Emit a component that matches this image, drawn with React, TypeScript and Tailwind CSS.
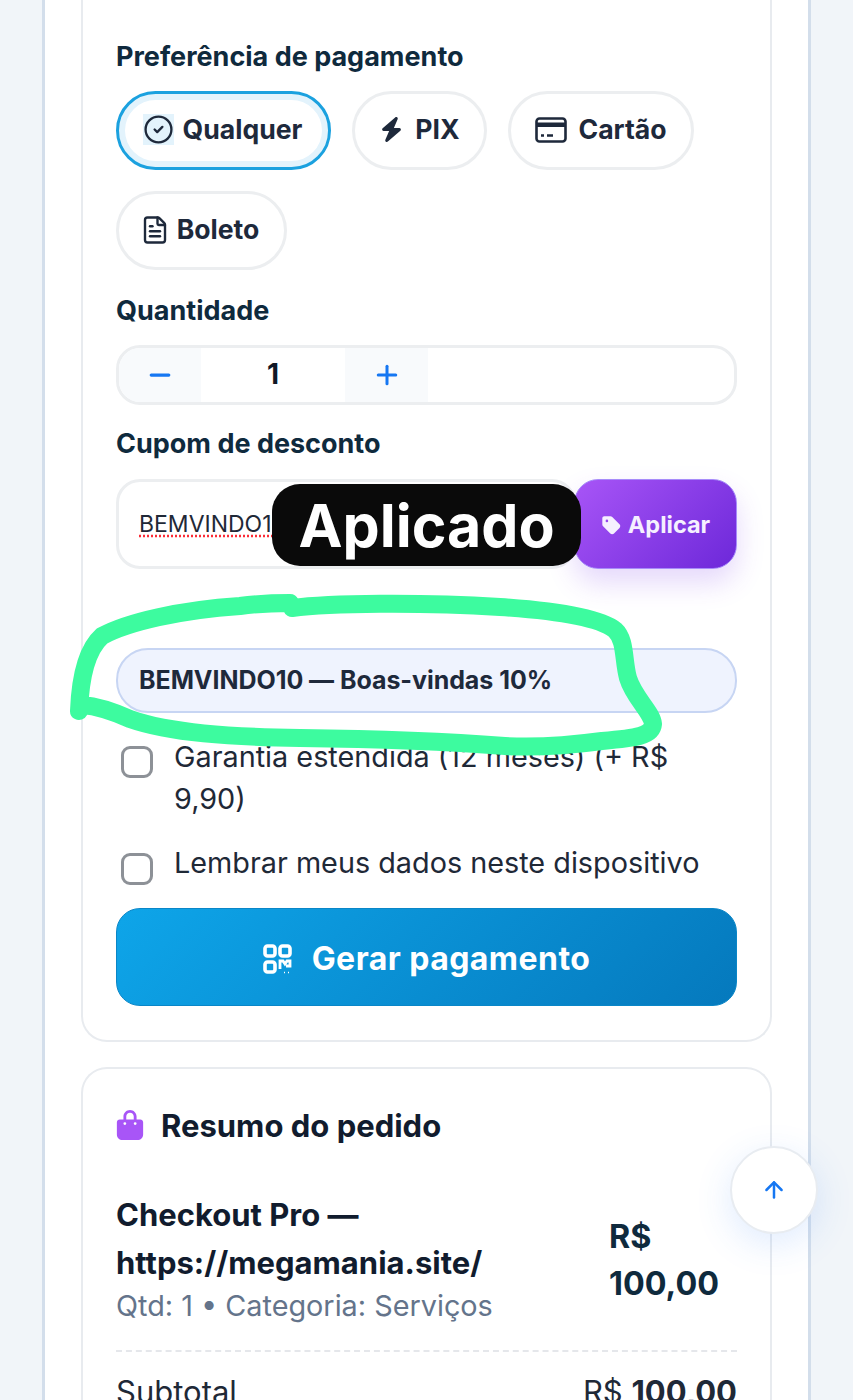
import React from 'react';
import { ArrowUp, CircleCheck, FileText, Minus, Plus } from 'lucide-react';
import { FaBagShopping, FaBolt, FaTag } from 'react-icons/fa6';

const font = { fontFamily: 'Inter, "Noto Sans", sans-serif' };

function CardIcon() {
  return (
    <svg width="32" height="26" viewBox="0 0 32 26" fill="none">
      <rect x="1.5" y="1.5" width="29" height="23" rx="3" stroke="#1e293b" strokeWidth="2.6" />
      <rect x="1.5" y="5.5" width="29" height="4.5" fill="#1e293b" />
      <path d="M6 18.5h3M12 18.5h6" stroke="#1e293b" strokeWidth="2.4" />
    </svg>
  );
}

function QrIcon() {
  return (
    <svg width="29" height="30" viewBox="0 0 29 30" fill="none">
      <rect x="2" y="2" width="10" height="10" rx="2.5" stroke="#fff" strokeWidth="3.6" />
      <rect x="17" y="2" width="10" height="10" rx="2.5" stroke="#fff" strokeWidth="3.6" />
      <rect x="2" y="18" width="10" height="10" rx="2.5" stroke="#fff" strokeWidth="3.6" />
      <path d="M17 25v-8h3l2 3 2-3h3v5h-4" stroke="#fff" strokeWidth="2.8" />
      <path d="M21 28.5h1M25 28.5h1" stroke="#fff" strokeWidth="1.4" />
    </svg>
  );
}

function Chip({ active, icon, label, w }: { active?: boolean; icon: React.ReactNode; label: string; w: string }) {
  return (
    <div
      className={`flex h-[79px] items-center justify-center gap-[11px] rounded-full bg-white pb-[2px] text-[26.6px] font-bold text-[#1e293b] ${w} ${
        active
          ? 'border-[3px] border-[#1ba1df] shadow-[inset_0_0_0_6px_#e3f3fc]'
          : 'border-[3px] border-[#eceef0]'
      }`}
    >
      {icon}
      <span>{label}</span>
    </div>
  );
}

function Label({ children }: { children: React.ReactNode }) {
  return <div className="text-[27px] leading-[34px] font-bold text-[#0f2a3d]">{children}</div>;
}

function Check({ className }: { className: string }) {
  return <div className={`h-[32px] w-[32px] shrink-0 rounded-[9px] border-[3px] border-[#8d9197] bg-white ${className}`} />;
}

export default function App() {
  return (
    <div className="relative h-[1400px] overflow-hidden bg-[#f1f5f9]" style={font}>
      <div className="mx-[42px] h-[1400px] border-x-[3px] border-[#d3deeb] bg-white px-[36px]">
        <div className="h-[1042px] rounded-b-[26px] border-x-2 border-b-2 border-[#e8ebef] px-[33px] pt-[40px]">
          <Label>Preferência de pagamento</Label>
          <div className="mt-[17px] flex flex-wrap gap-x-[21px] gap-y-[21px]">
            <Chip active w="w-[215px]" label="Qualquer" icon={<CircleCheck size={31} strokeWidth={1.8} className="-mx-[2px] bg-[#e3f3fc]" />} />
            <Chip w="w-[135px]" label="PIX" icon={<FaBolt size={25} />} />
            <Chip w="w-[186px]" label="Cartão" icon={<CardIcon />} />
            <Chip w="w-[171px]" label="Boleto" icon={<FileText size={30} strokeWidth={1.9} className="-mx-[4px]" />} />
          </div>

          <div className="mt-[24px]">
            <Label>Quantidade</Label>
          </div>
          <div className="mt-[17px] flex h-[60px] items-center overflow-hidden rounded-[24px] border-[3px] border-[#eceef0]">
            <div className="flex h-full w-[82px] items-center justify-center bg-[#f8fafc] text-[#1677f2]">
              <Minus size={30} strokeWidth={2.6} />
            </div>
            <div className="w-[144px] pb-[2px] text-center text-[28px] font-bold text-[#111827]">1</div>
            <div className="flex h-full w-[83px] items-center justify-center bg-[#f8fafc] text-[#1677f2]">
              <Plus size={30} strokeWidth={2.4} />
            </div>
          </div>

          <div className="mt-[22px]">
            <Label>Cupom de desconto</Label>
          </div>
          <div className="mt-[18px] flex h-[90px]">
            <div className="flex h-full w-[460px] items-center rounded-[24px] border-[3px] border-[#eceef0] pl-[20px] text-[23px] text-[#1f2937]">
              <span className="underline decoration-red-500 decoration-dotted underline-offset-4">BEMVINDO10</span>
            </div>
            <div className="-ml-[2px] flex h-full w-[163px] items-center justify-center gap-[6px] rounded-[24px] border border-[#a78bfa] bg-[linear-gradient(135deg,#a855f7,#6d28d9)] pt-[2px] text-[23.5px] font-bold text-[#f5f0ff] shadow-[0_14px_28px_rgba(124,58,237,0.2)]">
              <FaTag size={21} />
              <span>Aplicar</span>
            </div>
          </div>

          <div className="mt-[79px] flex h-[65px] items-center rounded-[32px] border-2 border-[#c7d5f3] bg-[#eff3fe] pl-[21px] text-[25px] font-bold tracking-[-0.05px] text-[#1e293b]">
            BEMVINDO10 — Boas-vindas 10%
          </div>

          <div className="mt-[23px] flex gap-[21px] pl-[5px]">
            <Check className="mt-[10px]" />
            <div className="text-[28.8px] leading-[42px] text-[#1f2937]">
              Garantia estendida (12 meses) (+ R$
              <br />
              9,90)
            </div>
          </div>
          <div className="mt-[22px] flex gap-[21px] pl-[5px]">
            <Check className="mt-[11px]" />
            <div className="text-[28.8px] leading-[42px] text-[#1f2937]">Lembrar meus dados neste dispositivo</div>
          </div>

          <div className="mt-[23px] flex h-[98px] items-center justify-center gap-[20px] rounded-[24px] border border-[#0a86c7] bg-[linear-gradient(135deg,#0ea5e9,#0579bd)] pt-[3px] text-[32px] font-bold tracking-[0.45px] text-white">
            <QrIcon />
            <span>Gerar pagamento</span>
          </div>
        </div>

        <div className="mt-[25px] h-[400px] rounded-t-[26px] border-x-2 border-t-2 border-[#e8ebef] px-[33px] pt-[39px]">
          <div className="flex items-center gap-[16px]">
            <FaBagShopping size={30} className="-ml-[1px] -mt-[2px] text-[#a855f7]" />
            <span className="text-[31px] leading-[36px] font-bold text-[#111c2e]">Resumo do pedido</span>
          </div>
          <div className="mt-[47px] flex items-center justify-between">
            <div>
              <div className="text-[31px] leading-[48px] font-bold text-[#111c2e]">
                Checkout Pro —
                <br />
                https://megamania.site/
              </div>
              <div className="mt-[1px] text-[28.8px] leading-[36px] text-[#64748b]">Qtd: 1 • Categoria: Serviços</div>
            </div>
            <div className="mr-[18px] w-[110px] pt-[5px] text-[32.3px] leading-[47px] font-bold text-[#0f2a3d]">
              R$
              <br />
              100,00
            </div>
          </div>
          <div className="mt-[26px] border-t-2 border-dashed border-[#e5e7eb]" />
          <div className="mt-[19px] flex justify-between text-[31px] leading-[42px] text-[#1f2937]">
            <span>Subtotal</span>
            <span>
              R$ <span className="font-bold">100,00</span>
            </span>
          </div>
        </div>
      </div>

      {/* marker scribble drawn over the page */}
      <svg className="pointer-events-none absolute top-0 left-0" width="853" height="1400" fill="none">
        <path
          d="M79 711 C80 685 84 652 102 636 C128 622 180 610 240 606 C255 604 275 603 290 603 L292 608 C330 603 420 602 500 607 C560 611 600 618 615 630 C626 640 623 660 628 678 C634 698 652 712 653 724 C652 736 636 738 602 741 C572 745 540 748 505 746 C440 741 380 739 300 738 C230 737 170 733 130 719 C110 710 95 706 82 705 Z"
          stroke="#3dfb9f"
          strokeWidth="18"
          strokeLinejoin="round"
        />
      </svg>

      <div className="absolute top-[484px] left-[272px] flex h-[82px] w-[309px] items-center justify-center rounded-[28px] bg-[#0a0a0a] pt-[2px] text-[59px] font-bold text-white">
        Aplicado
      </div>

      <div className="absolute top-[1146px] left-[730px] flex h-[88px] w-[88px] items-center justify-center rounded-full border-2 border-[#e8ecf1] bg-white text-[#1677f2] shadow-[0_10px_36px_rgba(59,130,246,0.16)]">
        <ArrowUp size={26} strokeWidth={2.3} />
      </div>
    </div>
  );
}
